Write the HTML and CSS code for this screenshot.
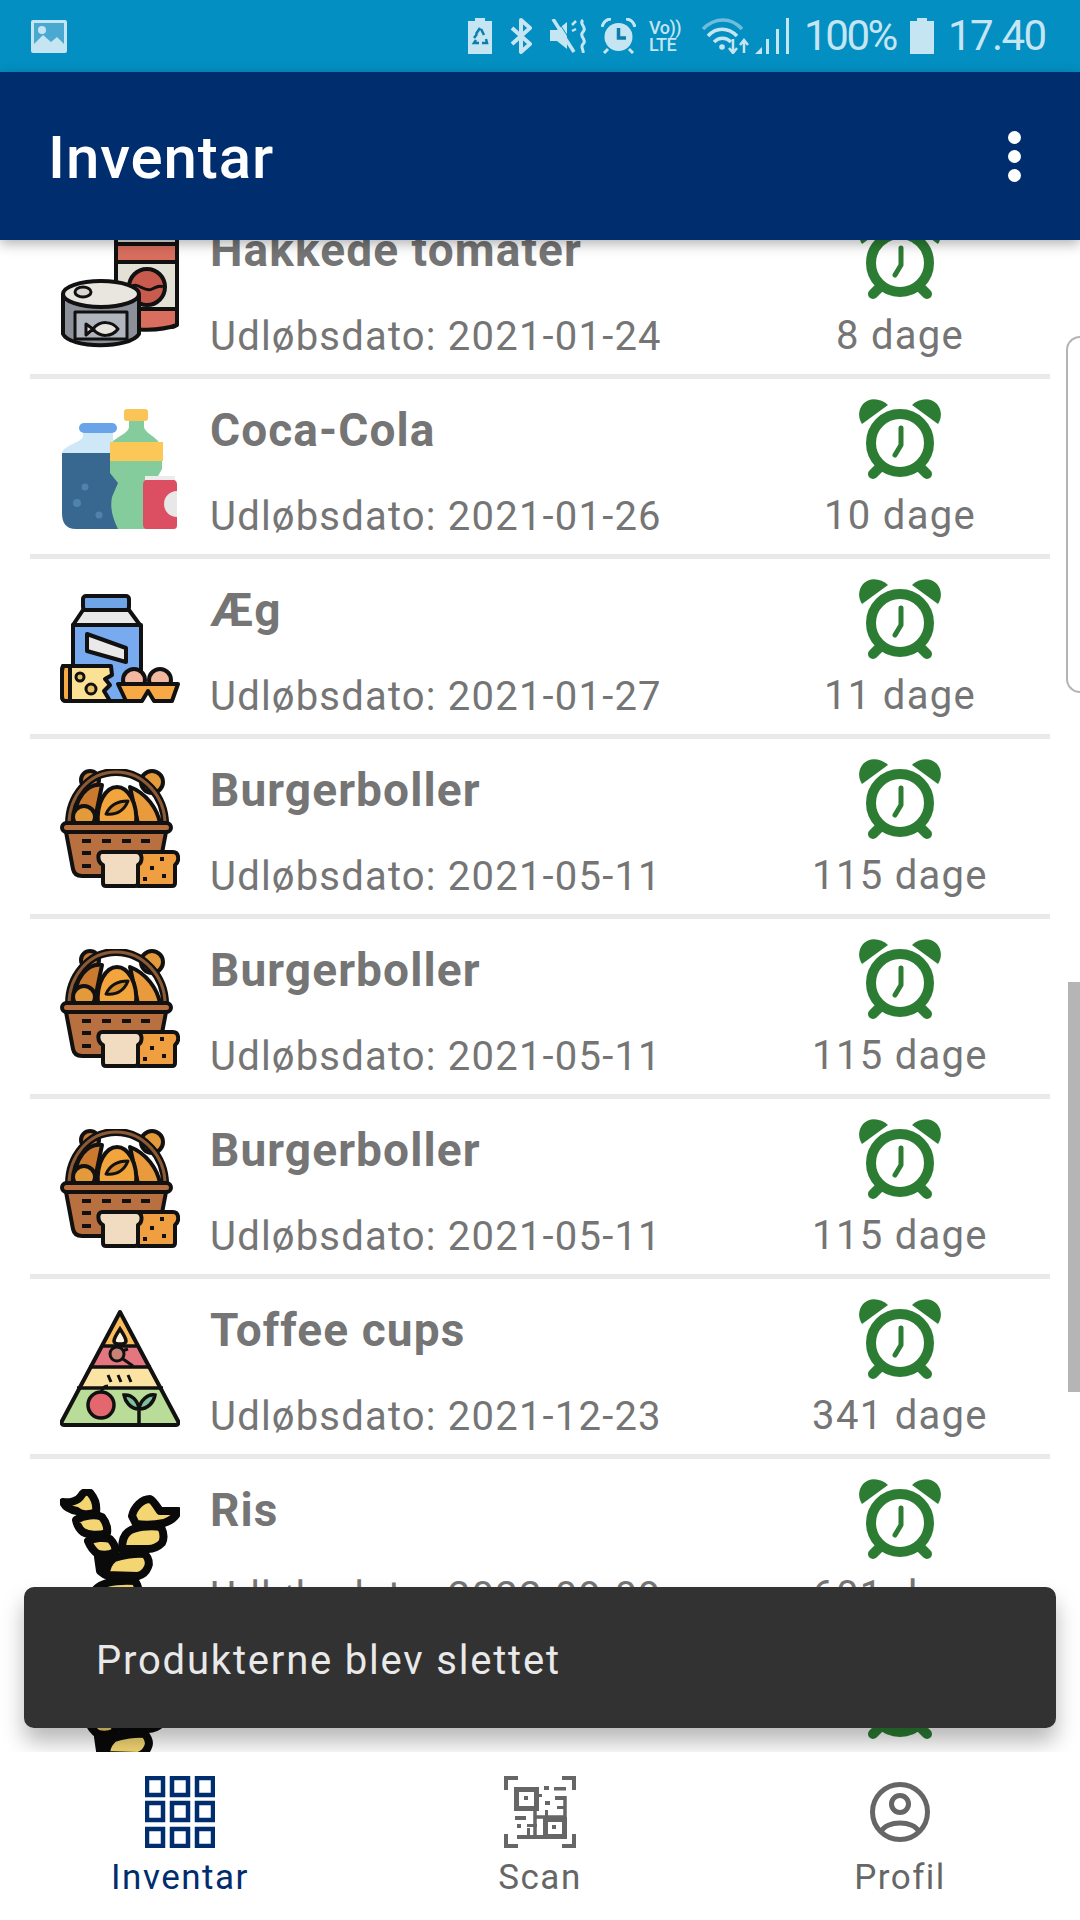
FILE: index.html
```html
<!DOCTYPE html>
<html lang="da">
<head>
<meta charset="utf-8">
<title>Inventar</title>
<link rel="stylesheet" href="styles.css">
</head>
<body>
<svg class="defs" width="0" height="0" aria-hidden="true">
  <defs>
    <symbol id="i-alarm" viewBox="0 0 82 82">
      <circle cx="41" cy="45" r="29" fill="none" stroke="#2c7d33" stroke-width="10"/>
      <path d="M29 7 C22 0 10 -1 4 6 C-1 12 -1 20 3 26 Z" fill="#2c7d33"/>
      <path d="M53 7 C60 0 72 -1 78 6 C83 12 83 20 79 26 Z" fill="#2c7d33"/>
      <path d="M21 69 L14 76 M61 69 L68 76" stroke="#2c7d33" stroke-width="10" stroke-linecap="round"/>
      <path d="M42 30 V47 L36 57" fill="none" stroke="#2c7d33" stroke-width="5" stroke-linecap="round" stroke-linejoin="round"/>
    </symbol>

    <symbol id="i-cans" viewBox="0 0 120 120">
      <g stroke="#111" stroke-width="4" stroke-linejoin="round">
        <rect x="56" y="-6" width="61" height="104" rx="5" fill="#e3e0d6"/>
        <rect x="56" y="15" width="61" height="18" fill="#d96e5e"/>
        <path d="M56 80 H117 V96 C100 102 75 102 56 98 Z" fill="#d96e5e"/>
        <circle cx="87" cy="58" r="18" fill="#c85a4e"/>
        <path d="M71 58 C78 52 84 64 92 60 C96 58 100 56 103 58" fill="none" stroke-width="3"/>
        <path d="M3 66 V105 C10 120 70 120 79 105 V66 Z" fill="#8b9099"/>
        <rect x="15" y="83" width="52" height="27" fill="#b0b5be" stroke-width="3"/>
        <ellipse cx="41" cy="65" rx="38" ry="13" fill="#e8e6df"/>
        <ellipse cx="23" cy="63" rx="8" ry="5" fill="#d9d7cf" stroke-width="3"/>
        <path d="M26 95 L33 100 L26 106 Z M33 100 C40 91 52 92 58 100 C52 108 40 109 33 100 Z" fill="#e8e6df" stroke-width="3"/>
      </g>
    </symbol>

    <symbol id="i-bottles" viewBox="0 0 120 120">
      <rect x="19" y="14" width="38" height="10" rx="5" fill="#69a4e8"/>
      <path d="M23 24 H53 V30 L60 44 H2 C4 36 20 34 23 28 Z" fill="#cfe8f7"/>
      <path d="M2 44 H62 V120 H16 C6 120 2 114 2 104 Z" fill="#38688f"/>
      <circle cx="17" cy="94" r="4" fill="#4f83ab"/><circle cx="25" cy="78" r="3.500" fill="#4f83ab"/><circle cx="39" cy="106" r="3.500" fill="#4f83ab"/>
      <path d="M69 12 H84 V18 C86 26 100 28 102 40 L102 60 L94 74 L98 120 H58 C52 108 50 98 52 88 L58 74 L50 64 V38 C52 28 68 26 69 18 Z" fill="#84cc9b"/>
      <rect x="64" y="0" width="24" height="12" rx="3" fill="#fbc457"/>
      <path d="M50 33 H103 V52 H50 Z" fill="#fbc857"/>
      <path d="M87 71 H113 C116 71 117 73 117 76 V116 C117 119 116 120 113 120 H87 C84 120 83 118 83 115 V76 C83 73 84 71 87 71 Z" fill="#dc4f62"/>
      <rect x="85" y="67" width="30" height="4" fill="#ececec"/>
      <path d="M117 82 A13 13 0 1 0 117 108 Z" fill="#e8e8e8"/>
    </symbol>

    <symbol id="i-dairy" viewBox="0 0 120 120">
      <g stroke="#111" stroke-width="4" stroke-linejoin="round">
        <rect x="23" y="7" width="46" height="14" rx="3" fill="#6fa4e6"/>
        <path d="M23 21 H69 L80 36 H13 Z" fill="#e9e9e9"/>
        <rect x="13" y="36" width="68" height="76" fill="#77aaee"/>
        <path d="M27 45 L66 59 V73 L27 62 Z" fill="#e9e9e9"/>
        <path d="M3 77 H51 L52 86 L45 90 L50 96 L44 102 L50 112 H7 C3 112 2 110 2 107 V82 C2 79 3 77 3 77 Z" fill="#fbe194"/>
        <path d="M3 77 H10 V112 H5 C3 112 2 110 2 107 V82 Z" fill="#f6a945"/>
        <circle cx="20" cy="88" r="4" fill="#e9c063" stroke-width="3"/>
        <circle cx="31" cy="100" r="5" fill="#e9c063" stroke-width="3"/>
        <circle cx="74" cy="91" r="11" fill="#f2b8a0"/>
        <circle cx="100" cy="91" r="11" fill="#f2b8a0"/>
        <path d="M58 95 H118 L112 112 H94 L88 102 L82 112 H66 Z" fill="#f6a945"/>
      </g>
    </symbol>

    <symbol id="i-bread" viewBox="0 0 120 120">
      <g stroke="#111" stroke-width="4" stroke-linejoin="round">
        <circle cx="30" cy="11" r="9" fill="#c57a34"/>
        <circle cx="92" cy="13" r="11" fill="#e39a3b"/>
        <path d="M14 55 C14 28 28 14 42 16 L34 55 Z" fill="#c97a2e"/>
        <path d="M70 18 C86 24 98 40 100 55 H78 Z" fill="#e99a3c"/>
        <circle cx="24" cy="48" r="11" fill="#e39a3b"/>
        <path d="M38 55 C36 34 46 18 57 18 C68 18 78 34 76 55 Z" fill="#f3a53d"/>
        <path d="M46 45 C50 36 58 32 68 32 C64 42 56 46 46 45 Z" fill="#d88b2c" stroke-width="3"/>
        <path d="M9 55 C9 28 28 3 56 3 C84 3 105 28 105 55" fill="none" stroke-width="8"/>
        <path d="M9 55 C9 28 28 3 56 3 C84 3 105 28 105 55" fill="none" stroke="#8d5a36" stroke-width="3"/>
        <rect x="2" y="54" width="109" height="9" rx="4.500" fill="#b87040"/>
        <path d="M6 63 H106 L99 100 C97 105 94 107 90 107 H22 C17 107 14 105 13 100 Z" fill="#b87040"/>
        <path d="M22 72 H31 M42 72 H51 M62 72 H71 M81 72 H90 M22 84 H31 M22 97 H31" stroke-width="4"/>
        <path d="M78 83 H113 C119 83 120 92 115 96 V114 C115 116 114 117 112 117 H78 Z" fill="#ef9f3f"/>
        <path d="M42 83 H76 C83 83 83 93 78 96 V114 C78 116 77 117 75 117 H46 C44 117 43 116 43 114 V96 C37 93 37 83 42 83 Z" fill="#f1dcc1"/>
      </g>
      <g fill="#111"><rect x="90" y="97" width="4" height="4"/><rect x="100" y="88" width="4" height="4"/><rect x="102" y="105" width="4" height="4"/><rect x="83" y="108" width="4" height="4"/></g>
    </symbol>

    <symbol id="i-pyramid" viewBox="0 0 120 120">
      <path d="M60 3 L79 37 H41 Z" fill="#fbbc5b"/>
      <path d="M41 37 H79 L91 58 H29 Z" fill="#e3767f"/>
      <path d="M29 58 H91 L103 79 H17 Z" fill="#fbe3a3"/>
      <path d="M17 79 H103 L118 115 H2 Z" fill="#b9dd98"/>
      <path d="M60 3 L118 112 C119 114 118 116 116 116 H4 C2 116 1 114 2 112 Z" fill="none" stroke="#111" stroke-width="4" stroke-linejoin="round"/>
      <path d="M41 37 H79 M29 58 H91 M17 79 H103" stroke="#111" stroke-width="3.500"/>
      <path d="M60 20 C64 26 66 29 66 32 C66 36 54 36 54 32 C54 29 56 26 60 20 Z" fill="#fff5e0" stroke="#111" stroke-width="3.500"/>
      <circle cx="57" cy="45" r="7" fill="#c98376" stroke="#111" stroke-width="3"/>
      <path d="M63 50 L73 57 M68 40 L62 42" stroke="#111" stroke-width="3"/>
      <path d="M48 66 L51 73 M58 66 L61 73 M68 66 L71 73" stroke="#111" stroke-width="3"/>
      <circle cx="41" cy="96" r="13" fill="#e3676f" stroke="#111" stroke-width="3.500"/>
      <path d="M41 84 C42 79 45 77 48 77" fill="none" stroke="#111" stroke-width="3"/>
      <path d="M79 115 V100 C70 100 65 92 64 86 C72 85 78 92 79 100 C80 92 88 84 95 86 C94 93 88 100 79 100" fill="#7fbf9a" stroke="#111" stroke-width="3.500"/>
    </symbol>

    <symbol id="i-pasta" viewBox="0 0 120 120">
      <g fill="#f3d672" stroke="#0a0a0a" stroke-width="8" stroke-linejoin="round">
        <path d="M36 100 C42 94 56 91 75 92 C79 98 79 102 78 105 C72 112 60 116 52 116 H38 C35 110 34 104 36 100 Z"/>
        <path d="M38 68 H47 L44 85 L40 82 Z"/>
        <path d="M3 13 C10 14 18 12 21 7 C23 3 28 1 31 5 C35 10 37 16 36 23 C28 27 20 25 17 22 C11 21 5 18 3 13 Z"/>
        <path d="M16 31 C24 26 36 25 42 28 C46 33 48 38 47 44 C38 47 28 46 23 43 C19 40 17 36 16 31 Z"/>
        <path d="M28 52 C34 49 44 48 50 50 C54 54 56 59 55 63 C48 67 42 66 38 65 C33 62 30 57 28 52 Z"/>
        <path d="M72 27 C74 18 82 10 90 10 C94 12 97 18 100 22 L118 22 C116 28 110 32 104 34 C94 36 84 36 76 35 Z"/>
        <path d="M62 60 C62 52 64 46 68 43 C74 38 90 36 101 38 C104 44 104 50 102 54 C98 58 92 60 88 60 Z"/>
        <path d="M46 86 C46 78 50 72 54 69 C62 66 76 64 85 65 C89 70 90 74 88 78 C86 83 82 86 78 87 Z"/>
      </g>
    </symbol>
  </defs>
</svg>

<div class="app">
  <header class="status">
    <svg class="st st-image" viewBox="0 0 36 33"><rect width="36" height="33" rx="2" fill="#c5e5f3"/><rect x="3" y="3" width="30" height="27" fill="#4aa9d0"/><circle cx="11" cy="10" r="4" fill="#c5e5f3"/><path d="M3 30 V24 L12 15 L20 22 L26 17 L33 24 V30 Z" fill="#c5e5f3"/></svg>
    <div class="status-right">
      <svg class="st st-batt" viewBox="0 0 24 36"><path d="M7 0 H17 V3 H24 V36 H0 V3 H7 Z" fill="#c5e5f3"/><path d="M12 10 L8 16 M16 17 L13 11 M8 22 L6 25 H11 M18 21 L19 25 H14 M9 16 L6 20" fill="none" stroke="#0b7eae" stroke-width="2.500"/></svg>
      <svg class="st st-bt" viewBox="0 0 24 36"><path d="M3 10 L21 26 L12 34 V2 L21 10 L3 26" fill="none" stroke="#c5e5f3" stroke-width="4" stroke-linejoin="round"/></svg>
      <svg class="st st-mute" viewBox="0 0 40 34"><path d="M0 11 H7 L17 3 V30 L7 22 H0 Z" fill="#c5e5f3"/><path d="M3 0 L24 33" stroke="#c5e5f3" stroke-width="3.500"/><path d="M3 0 L24 33" stroke="#038fc1" stroke-width="1" transform="translate(3 -1)"/><path d="M33 1 C28 5 38 8 33 13 C28 17 38 21 33 25 C30 28 34 31 33 34" fill="none" stroke="#c5e5f3" stroke-width="3"/><path d="M22 6 L26 2 M22 12 L26 10" stroke="#c5e5f3" stroke-width="2.500"/></svg>
      <svg class="st st-alarm" viewBox="0 0 35 36"><circle cx="17.500" cy="19" r="14" fill="#c5e5f3"/><path d="M1 9 C2 4 6 1 10 1 M34 9 C33 4 29 1 25 1 M7 31 L3 35 M28 31 L32 35" fill="none" stroke="#c5e5f3" stroke-width="3"/><path d="M17.500 10 V20 H25" fill="none" stroke="#0b7eae" stroke-width="3.500"/></svg>
      <div class="st-volte"><span>Vo))</span><span>LTE</span></div>
      <svg class="st st-wifi" viewBox="0 0 49 36"><path d="M2 11 C14 -1 30 -1 41 11" fill="none" stroke="#6fbcdc" stroke-width="3.500"/><path d="M7 18 C15 9 27 9 36 18 M13 24 C18 19 25 19 30 24" fill="none" stroke="#c5e5f3" stroke-width="3.500"/><circle cx="21" cy="29" r="2.800" fill="#c5e5f3"/><path d="M32 21 V34 M28 30 L32 35 L36 30 M43 35 V23 M39 27 L43 22 L47 27" fill="none" stroke="#c5e5f3" stroke-width="2.500"/></svg>
      <svg class="st st-signal" viewBox="0 0 36 36"><path d="M1 36 L8 29 V36 Z" fill="#c5e5f3"/><rect x="12" y="21" width="3" height="15" fill="#c5e5f3"/><rect x="22" y="11" width="3" height="25" fill="#c5e5f3"/><rect x="32" y="0" width="3" height="36" fill="#c5e5f3"/></svg>
      <span class="st-text st-pct">100%</span>
      <svg class="st st-full" viewBox="0 0 24 36"><path d="M7 0 H17 V3 H24 V36 H0 V3 H7 Z" fill="#c5e5f3"/></svg>
      <span class="st-text st-time">17.40</span>
    </div>
  </header>

  <div class="appbar">
    <h1 class="appbar-title">Inventar</h1>
    <div class="kebab"><i></i><i></i><i></i></div>
  </div>

  <main class="content">
    <ul class="list">
      <li class="row">
        <svg class="thumb"><use href="#i-cans"/></svg>
        <div class="info"><div class="name">Hakkede tomater</div><div class="date">Udløbsdato: 2021-01-24</div></div>
        <div class="days"><svg class="clock"><use href="#i-alarm"/></svg><div class="count">8 dage</div></div>
      </li>
      <li class="row">
        <svg class="thumb"><use href="#i-bottles"/></svg>
        <div class="info"><div class="name">Coca-Cola</div><div class="date">Udløbsdato: 2021-01-26</div></div>
        <div class="days"><svg class="clock"><use href="#i-alarm"/></svg><div class="count">10 dage</div></div>
      </li>
      <li class="row">
        <svg class="thumb"><use href="#i-dairy"/></svg>
        <div class="info"><div class="name">Æg</div><div class="date">Udløbsdato: 2021-01-27</div></div>
        <div class="days"><svg class="clock"><use href="#i-alarm"/></svg><div class="count">11 dage</div></div>
      </li>
      <li class="row">
        <svg class="thumb"><use href="#i-bread"/></svg>
        <div class="info"><div class="name">Burgerboller</div><div class="date">Udløbsdato: 2021-05-11</div></div>
        <div class="days"><svg class="clock"><use href="#i-alarm"/></svg><div class="count">115 dage</div></div>
      </li>
      <li class="row">
        <svg class="thumb"><use href="#i-bread"/></svg>
        <div class="info"><div class="name">Burgerboller</div><div class="date">Udløbsdato: 2021-05-11</div></div>
        <div class="days"><svg class="clock"><use href="#i-alarm"/></svg><div class="count">115 dage</div></div>
      </li>
      <li class="row">
        <svg class="thumb"><use href="#i-bread"/></svg>
        <div class="info"><div class="name">Burgerboller</div><div class="date">Udløbsdato: 2021-05-11</div></div>
        <div class="days"><svg class="clock"><use href="#i-alarm"/></svg><div class="count">115 dage</div></div>
      </li>
      <li class="row">
        <svg class="thumb"><use href="#i-pyramid"/></svg>
        <div class="info"><div class="name">Toffee cups</div><div class="date">Udløbsdato: 2021-12-23</div></div>
        <div class="days"><svg class="clock"><use href="#i-alarm"/></svg><div class="count">341 dage</div></div>
      </li>
      <li class="row">
        <svg class="thumb"><use href="#i-pasta"/></svg>
        <div class="info"><div class="name">Ris</div><div class="date">Udløbsdato: 2022-09-09</div></div>
        <div class="days"><svg class="clock"><use href="#i-alarm"/></svg><div class="count">601 dage</div></div>
      </li>
      <li class="row">
        <svg class="thumb"><use href="#i-pasta"/></svg>
        <div class="info"><div class="name">Ris</div><div class="date">Udløbsdato: 2022-09-09</div></div>
        <div class="days"><svg class="clock"><use href="#i-alarm"/></svg><div class="count">601 dage</div></div>
      </li>
    </ul>
    <div class="edge-handle"></div>
    <div class="scrollbar"></div>
    <div class="toast">Produkterne blev slettet</div>
  </main>

  <nav class="tabs">
    <div class="tab tab-active">
      <div class="tab-icon">
        <svg class="tab-svg-grid" viewBox="0 0 70 72"><g fill="none" stroke="#002d6e" stroke-width="4.500"><rect x="2" y="2" width="16" height="17"/><rect x="27" y="2" width="16" height="17"/><rect x="52" y="2" width="16" height="17"/><rect x="2" y="27" width="16" height="17"/><rect x="27" y="27" width="16" height="17"/><rect x="52" y="27" width="16" height="17"/><rect x="2" y="53" width="16" height="17"/><rect x="27" y="53" width="16" height="17"/><rect x="52" y="53" width="16" height="17"/></g></svg>
      </div>
      <div class="tab-label">Inventar</div>
    </div>
    <div class="tab">
      <div class="tab-icon">
        <svg class="tab-svg-qr" viewBox="0 0 72 72">
          <path d="M14 2 H2 V14 M58 2 H70 V14 M2 58 V70 H14 M70 58 V70 H58" fill="none" stroke="#666" stroke-width="4"/>
          <rect x="12.500" y="13.500" width="20" height="19" fill="none" stroke="#666" stroke-width="5"/>
          <rect x="41.500" y="43.500" width="19" height="17" fill="none" stroke="#666" stroke-width="5"/>
          <path d="M31 33 V60 M31 41 H61 M61 20 V46" fill="none" stroke="#666" stroke-width="3.500"/>
          <g fill="#666"><rect x="20" y="20" width="4" height="4"/><rect x="40" y="10" width="5" height="4"/><rect x="50" y="11" width="12" height="3.500"/><rect x="33" y="18" width="5" height="3"/><rect x="41" y="25" width="5" height="4"/><rect x="51" y="20" width="10" height="4"/><rect x="53" y="30" width="7" height="3"/><rect x="41" y="34" width="3" height="7"/><rect x="48" y="49" width="4" height="4"/><rect x="11" y="40" width="11" height="4"/><rect x="13" y="48" width="4" height="4"/><rect x="23" y="48" width="10" height="3"/><rect x="23" y="52" width="3" height="7"/><rect x="13" y="59" width="33" height="4"/></g>
        </svg>
      </div>
      <div class="tab-label">Scan</div>
    </div>
    <div class="tab">
      <div class="tab-icon">
        <svg class="tab-svg-user" viewBox="0 0 60 60"><circle cx="30" cy="30" r="27.500" fill="none" stroke="#666" stroke-width="5"/><circle cx="30" cy="22" r="8.500" fill="none" stroke="#666" stroke-width="5"/><path d="M11 50 C16 38 44 38 49 50" fill="none" stroke="#666" stroke-width="5"/></svg>
      </div>
      <div class="tab-label">Profil</div>
    </div>
  </nav>
</div>
</body>
</html>
```

FILE: styles.css
```css
* { box-sizing: border-box; }
html, body { margin: 0; padding: 0; }
body { font-family: Roboto, "Liberation Sans", sans-serif; background: #fff; }
.defs { position: absolute; }

.app { width: 1080px; height: 1920px; display: flex; flex-direction: column; overflow: hidden; }

/* status bar */
.status { height: 72px; flex: none; background: #038fc1; display: flex; align-items: center; justify-content: space-between; padding: 0 36px 0 31px; color: #c5e5f3; }
.status-right { display: flex; align-items: center; }
.st { display: block; flex: none; height: 36px; }
.st-image { width: 36px; height: 33px; }
.st-batt { width: 24px; }
.st-bt { width: 24px; margin-left: 17px; }
.st-mute { width: 40px; height: 34px; margin-left: 17px; }
.st-alarm { width: 35px; margin-left: 11px; }
.st-volte { width: 35px; margin-left: 13px; display: flex; flex-direction: column; font-size: 18px; line-height: 17px; font-weight: 500; letter-spacing: -0.5px; }
.st-wifi { width: 49px; margin-left: 17px; }
.st-signal { width: 36px; margin-left: 4px; }
.st-text { font-size: 42px; line-height: 42px; white-space: nowrap; }
.st-pct { margin-left: 14px; letter-spacing: -2.4px; width: 90px; }
.st-full { width: 24px; margin-left: 16px; }
.st-time { margin-left: 14px; width: 96px; letter-spacing: -1.6px; }

/* app bar */
.appbar { height: 168px; flex: none; background: #002d6e; display: flex; align-items: center; justify-content: space-between; padding: 0 59px 0 48px; position: relative; z-index: 2; box-shadow: 0 4px 12px rgba(0, 0, 0, .3); }
.appbar-title { margin: 0; padding-top: 4px; font-size: 60px; line-height: 68px; font-weight: 500; letter-spacing: 0.9px; color: #fff; }
.kebab { display: flex; flex-direction: column; gap: 6px; }
.kebab i { display: block; width: 13px; height: 13px; border-radius: 50%; background: #fff; }

/* list */
.content { flex: 1; position: relative; overflow: hidden; background: #fff; }
.list { list-style: none; margin: -41px 30px 0; padding: 0; }
.row { height: 180px; border-bottom: 5px solid #e9e9e9; display: flex; padding: 0 50px 0 30px; }
.thumb { width: 120px; height: 120px; flex: none; margin-top: 30px; overflow: visible; }
.info { flex: 1; min-width: 0; padding: 23px 0 0 30px; display: flex; flex-direction: column; gap: 34px; color: #757575; }
.name { font-size: 46px; line-height: 56px; font-weight: 700; letter-spacing: 1.1px; white-space: nowrap; }
.date { font-size: 40px; line-height: 50px; letter-spacing: 1.2px; white-space: nowrap; }
.days { width: 200px; flex: none; padding-top: 19px; display: flex; flex-direction: column; align-items: center; gap: 11px; color: #757575; }
.clock { width: 82px; height: 82px; display: block; }
.count { font-size: 40px; line-height: 50px; letter-spacing: 1.3px; white-space: nowrap; }

/* overlays */
.edge-handle { position: absolute; right: 0; top: 96px; width: 14px; height: 357px; border: 2px solid #b4b4b4; border-right: 0; border-radius: 14px 0 0 14px; background: #fff; }
.scrollbar { position: absolute; right: 0; top: 742px; width: 12px; height: 410px; background: #b5b5b5; }
.toast { position: absolute; left: 24px; top: 1347px; width: 1032px; height: 141px; border-radius: 10px; background: #323232; color: #e9e9e9; font-size: 40px; letter-spacing: 1.8px; padding: 5px 0 0 72px; display: flex; align-items: center; box-shadow: 0 14px 22px rgba(0, 0, 0, .28); }

/* bottom tabs */
.tabs { height: 168px; flex: none; background: #fff; display: grid; grid-template-columns: repeat(3, 1fr); position: relative; z-index: 1; }
.tab { display: flex; flex-direction: column; align-items: center; padding-top: 24px; gap: 10px; color: #666; }
.tab-active { color: #002d6e; }
.tab-icon { height: 72px; display: flex; align-items: center; justify-content: center; }
.tab-icon svg { display: block; }
.tab-svg-grid { width: 70px; height: 72px; }
.tab-svg-qr { width: 72px; height: 72px; }
.tab-svg-user { width: 60px; height: 60px; }
.tab-label { font-size: 35px; line-height: 40px; letter-spacing: 1.5px; }
```
